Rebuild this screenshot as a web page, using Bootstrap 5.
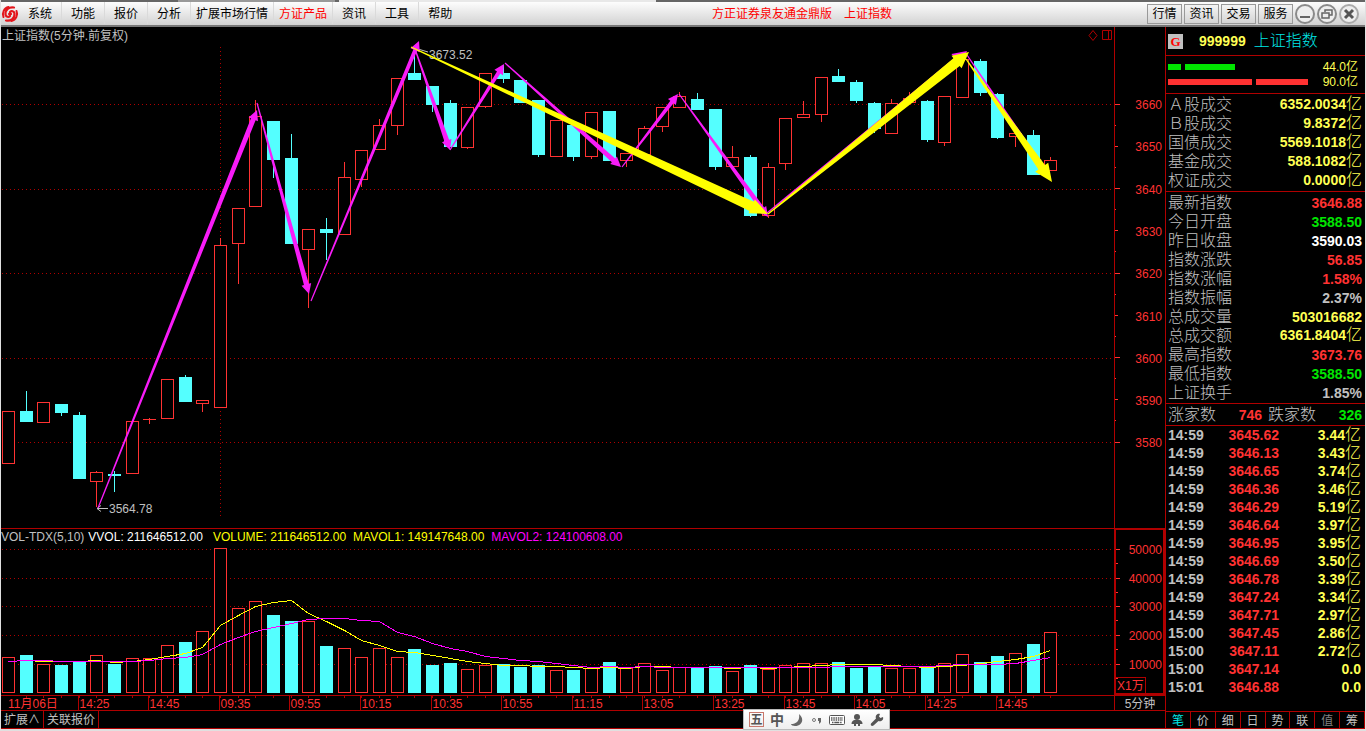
<!DOCTYPE html>
<html lang="zh-CN">
<head>
<meta charset="utf-8">
<meta name="viewport" content="width=device-width, initial-scale=1">
<title>上证指数 - 方正证券泉友通金鼎版</title>
<link href="https://cdn.jsdelivr.net/npm/bootstrap@5.3.0/dist/css/bootstrap.min.css" rel="stylesheet">
<style>
:root{--line:#b00000;--up:#ff3232;--down:#54ffff;--grey:#c0c0c0;--gold:#ffff54;--green:#00e600}
body{font-family:"Liberation Sans","Noto Sans CJK SC",sans-serif;font-size:12px;line-height:16px;background:#000;color:var(--grey);height:100vh;min-height:600px;border:1px solid #e0e0e0;border-width:0 1px 2px}
a{color:inherit;text-decoration:none}
button{font:inherit;color:inherit;background:none;border:0;padding:0}
.strip{height:2px;background:linear-gradient(90deg,#666 0 13%,#999 13% 24.5%,#666 24.5% 24.8%,#e8e8e8 24.8% 48%,#666 48%)}
.topbar{height:25px;background:linear-gradient(#fdfdfd,#d2d2d2);border-bottom:2px solid #777;color:#000}
.menu a{padding:5px 9px 3px;border-right:1px solid #dadada}
.menu a.longer{padding:5px 5px 3px}
.menu li:last-child a{border:0}
.hot{color:#f00}
.caption{flex:0 0 435px;gap:12px;padding-top:1px}
.tool{width:35px;height:20px;border:1px solid #999;background:linear-gradient(#f4f4f4,#d4d4d4)}
.tools{gap:2px;padding-right:6px}
.price-pane{flex:501 1 0;border-bottom:1px solid var(--line);min-height:0}
.vol-pane{flex:166 1 0;min-height:0}
.pane{position:relative}
.pane svg{display:block;width:100%;height:100%}
.pane-title{position:absolute;left:1px;top:1px}
.legend{top:0;left:0}
.legend span{white-space:nowrap;margin-left:7px}
.legend span:first-child{margin-left:0}
.legend span:nth-child(2){margin-left:4px}
.legend span:nth-child(3){margin-left:10px}
.axis{flex:0 0 51px;border-left:1px solid var(--line)}
.vol-pane .axis{border:2px solid var(--line);border-top-width:1px;position:relative}
.unit{position:absolute;left:0;bottom:0;border:1px solid var(--line);border-width:1px 1px 0 0;color:var(--up);height:16px;padding:0 1px;white-space:nowrap}
.time-row{height:16px;border:1px solid var(--line);border-width:1px 0}
.time-row .period{flex:0 0 51px;border-left:1px solid var(--line);text-align:center;line-height:16px}
.sheet-row{height:18px;border-bottom:1px solid var(--line)}
.sheet-row button{border-right:1px solid var(--line);padding:0 3px;line-height:18px}
.quote{flex:0 0 200px;border-left:1px solid var(--line)}
.quote section{border-bottom:1px solid var(--line);padding:1px 3px 1px 2px}
.quote th{font-weight:300;font-size:16px;padding:0;white-space:nowrap}
.quote td{padding:0;text-align:right;white-space:nowrap}
.quote table{width:100%}
.facts tr{height:19px}
.facts th,.facts td{line-height:18px}
.breadth{table-layout:fixed}
.breadth th{width:48px}
.breadth th+td{width:46px}
.breadth th:nth-child(3){width:54px;padding-left:6px}
.breadth td:last-child{width:auto}
.deals table{table-layout:fixed}
.deals tr{height:18px}
.deals td{line-height:16px}
.deals td:first-child{width:40px}
.deals td:nth-child(2){width:71px}
.n{font-weight:700;font-size:14px}
.u{font-weight:300;font-size:16px;line-height:1}
.y{color:var(--gold)}.r{color:var(--up)}.g{color:var(--green)}.w{color:#fff}
.badge-g{width:15px;height:15px;background:var(--grey);color:#f00;font:700 13px/15px "Liberation Serif",serif;text-align:center}
.strength{height:15px}
.seg{height:6px}
.qtabs button{flex:1 1 0;border-right:1px solid var(--line);line-height:18px}
.qtabs{height:18px;border:1px solid var(--line);border-width:1px 0}
.ime{position:absolute;left:54.4%;bottom:1px;height:21px;background:linear-gradient(#fff,#eee);border:1px solid #bbb;padding:0 2px 0 3px;color:#555}
.ime button{width:20px;height:19px;display:flex;align-items:center;justify-content:center;font-weight:700}
.ime .wubi{width:15px;height:15px;border:1px solid #c8776c;margin:0 3px 0 2px}
svg text{font-family:"Liberation Sans","Noto Sans CJK SC",sans-serif;font-size:12px}
</style>
</head>
<body class="d-flex flex-column">
<header>
  <div class="strip"></div>
  <nav class="topbar d-flex align-items-center">
    <svg width="18" height="18" viewBox="0 0 18 18" fill="none" stroke="#e3161c" stroke-linecap="round" aria-hidden="true"><path d="M7.500 2C3 3 .8 8 2.500 12" stroke-width="2"/><path d="M10.500 16C15 15 17.200 10 15.500 6" stroke-width="2"/><path d="M13 2.500C8 1.500 4 5 4.500 9.500 5 12 7.500 12.500 9 11" stroke-width="2.200"/><path d="M5 15.500C10 16.500 14 13 13.500 8.500 13 6 10.500 5.500 9 7" stroke-width="2.200"/><circle cx="9" cy="9" r="1.400" fill="#e3161c"/></svg>
    <ul class="menu list-unstyled d-flex mb-0 text-nowrap">
      <li><a href="#">系统</a></li><li><a href="#">功能</a></li><li><a href="#">报价</a></li><li><a href="#">分析</a></li><li><a class="longer" href="#">扩展市场行情</a></li><li><a href="#" class="hot longer">方证产品</a></li><li><a href="#">资讯</a></li><li><a href="#">工具</a></li><li><a href="#">帮助</a></li>
    </ul>
    <div class="caption hot ms-auto d-flex text-nowrap"><span>方正证券泉友通金鼎版</span><span>上证指数</span></div>
    <div class="tools d-flex align-items-center">
      <button class="tool">行情</button><button class="tool">资讯</button><button class="tool">交易</button><button class="tool">服务</button>
      <button aria-label="最小化"><svg class="d-block" width="20" height="20" fill="none" stroke="#8a8a8a" stroke-width="2"><circle cx="10" cy="10" r="9" fill="#eee"/><path d="M5 13h10" stroke="#666" stroke-width="2"/></svg></button>
      <button aria-label="还原"><svg class="d-block" width="20" height="20" fill="none" stroke="#8a8a8a" stroke-width="2"><circle cx="10" cy="10" r="9" fill="#eee"/><path d="M8 8V6h7v5h-3M5 9h7v5H5z" stroke="#666" stroke-width="1.500"/></svg></button>
      <button aria-label="关闭"><svg class="d-block" width="20" height="20" fill="none" stroke="#aaa" stroke-width="2"><circle cx="10" cy="10" r="9" fill="#eee"/><path d="M6 6l8 8M14 6l-8 8" stroke="#555" stroke-width="3"/></svg></button>
    </div>
  </nav>
</header>
<main class="d-flex flex-grow-1" style="min-height:0">
  <div class="d-flex flex-column flex-grow-1" style="min-width:0">
    <div class="price-pane d-flex">
      <div class="pane flex-grow-1"><svg id="price"></svg><div class="pane-title">上证指数(5分钟.前复权)</div></div>
      <div class="axis"><svg id="priceAxis" width="50" height="100%"></svg></div>
    </div>
    <div class="vol-pane d-flex">
      <div class="pane flex-grow-1"><svg id="volume"></svg>
        <div class="pane-title legend d-flex"><span>VOL-TDX(5,10)</span><span class="w">VVOL: 211646512.00</span><span style="color:#ff0">VOLUME: 211646512.00</span><span style="color:#ff0">MAVOL1: 149147648.00</span><span style="color:#f0f">MAVOL2: 124100608.00</span></div>
      </div>
      <div class="axis"><svg id="volAxis" width="47" height="100%"></svg><span class="unit">X1万</span></div>
    </div>
    <div class="time-row d-flex"><div class="pane flex-grow-1"><svg id="times"></svg></div><div class="period">5分钟</div></div>
    <div class="sheet-row d-flex"><button>扩展∧</button><button>关联报价</button></div>
  </div>
  <aside class="quote d-flex flex-column">
    <section class="d-flex align-items-center" style="height:29px"><span class="badge-g">G</span><span class="n y ms-3">999999</span><span class="u ms-1 ps-1" style="color:#00e6e6">上证指数</span></section>
    <section style="height:38px;padding-top:3px">
      <div class="strength d-flex align-items-center"><i class="seg me-1" style="width:13px;background:#00e600"></i><i class="seg" style="width:50px;background:#00e600"></i><span class="y ms-auto pe-1">44.0亿</span></div>
      <div class="strength d-flex align-items-center"><i class="seg me-1" style="width:84px;background:#ff3232"></i><i class="seg" style="width:52px;background:#ff3232"></i><span class="y ms-auto pe-1">90.0亿</span></div>
    </section>
    <section class="facts"><table>
      <tr><th>Ａ股成交</th><td class="y"><span class="n">6352.0034</span><span class="u">亿</span></td></tr>
      <tr><th>Ｂ股成交</th><td class="y"><span class="n">9.8372</span><span class="u">亿</span></td></tr>
      <tr><th>国债成交</th><td class="y"><span class="n">5569.1018</span><span class="u">亿</span></td></tr>
      <tr><th>基金成交</th><td class="y"><span class="n">588.1082</span><span class="u">亿</span></td></tr>
      <tr><th>权证成交</th><td class="y"><span class="n">0.0000</span><span class="u">亿</span></td></tr>
    </table></section>
    <section class="facts"><table>
      <tr><th>最新指数</th><td class="n r">3646.88</td></tr>
      <tr><th>今日开盘</th><td class="n g">3588.50</td></tr>
      <tr><th>昨日收盘</th><td class="n w">3590.03</td></tr>
      <tr><th>指数涨跌</th><td class="n r">56.85</td></tr>
      <tr><th>指数涨幅</th><td class="n r">1.58%</td></tr>
      <tr><th>指数振幅</th><td class="n">2.37%</td></tr>
      <tr><th>总成交量</th><td class="n y">503016682</td></tr>
      <tr><th>总成交额</th><td class="y"><span class="n">6361.8404</span><span class="u">亿</span></td></tr>
      <tr><th>最高指数</th><td class="n r">3673.76</td></tr>
      <tr><th>最低指数</th><td class="n g">3588.50</td></tr>
      <tr><th>上证换手</th><td class="n">1.85%</td></tr>
    </table></section>
    <section class="facts"><table class="breadth"><tr><th>涨家数</th><td class="n r">746</td><th>跌家数</th><td class="n g">326</td></tr></table></section>
    <div class="deals flex-grow-1"><table id="deals" style="margin-left:2px;width:193px"></table></div>
    <div class="qtabs d-flex"><button style="color:#00e6e6">笔</button><button>价</button><button>细</button><button>日</button><button>势</button><button>联</button><button style="color:#808080">值</button><button>筹</button></div>
  </aside>
</main>
<div class="ime d-flex align-items-center">
  <button class="wubi">五</button><button style="font-size:14px">中</button>
  <button aria-label="半角"><svg width="14" height="14"><path d="M9 1c6 5 3 12-4 12-2 0-4-1-4-2 6 0 9-4 8-10z" fill="#666"/></svg></button>
  <button aria-label="标点"><svg width="14" height="14"><circle cx="4" cy="7" r="1.500" fill="none" stroke="#777"/><path d="M8 5h3v4l-2 2v-3H8z" fill="#666"/></svg></button>
  <button aria-label="软键盘"><svg width="16" height="12"><rect x=".5" y="1.500" width="15" height="9" rx="1" fill="#fff" stroke="#555"/><path d="M2 4h12M2 6h12" stroke="#555" stroke-width="1.400" stroke-dasharray="1.500 .8"/><path d="M3 8.500h10" stroke="#555" stroke-width="1.400" stroke-dasharray="1.500 .8 5 .8"/></svg></button>
  <button aria-label="用户"><svg width="14" height="14"><circle cx="7" cy="4" r="3" fill="#555"/><path d="M4.500 7h5C11.500 7.500 12.500 9 12.500 11H10v2H8v-2H6v2H4v-2H1.500C1.500 9 2.500 7.500 4.500 7z" fill="#555"/></svg></button>
  <button aria-label="设置"><svg width="14" height="14"><path d="M13 4l-2.500 1L9 3.500 10 1C7 0 5 3 6 5.500L1 10.500c-1 2 1 3 2.500 2L8.500 8C11 9 14 7 13 4z" fill="#555"/></svg></button>
</div>
<script src="https://cdn.jsdelivr.net/npm/bootstrap@5.3.0/dist/js/bootstrap.bundle.min.js"></script>
<script>
// Each candle: [rising?, high, body top, body bottom, low, volume top], in design units of a 1113 x 668 plot.
const K=[[1,411,411,463,463,657],[0,391,411,422,422,655],[1,402,402,422,422,664],[0,404,404,413,416,665],[0,412,415,479,479,662],[1,471,472,481,507,655],[0,471,474,476,492,664],[1,421,421,473,473,658],[1,418,419,419,424,658],[1,379,379,418,418,645],[0,375,377,402,402,642],[1,400,400,403,412,631],[1,238,245,407,407,548],[1,208,208,243,284,608],[1,100,116,206,206,601],[0,121,121,160,178,615],[0,134,158,244,244,621],[1,229,229,249,308,621],[0,218,229,233,260,646],[1,162,177,234,234,648],[1,150,150,179,187,657],[1,119,125,149,149,648],[1,78,78,125,135,657],[0,50,73,80,80,649],[0,86,86,105,112,665],[0,100,103,147,147,663],[1,107,107,147,149,669],[1,73,73,106,108,665],[0,65,73,79,83,664],[0,80,80,103,103,667],[0,100,100,155,157,665],[1,120,120,156,156,670],[0,125,125,157,161,670],[1,112,112,156,159,668],[0,111,111,161,161,662],[1,153,153,160,167,668],[1,126,128,154,156,663],[1,107,107,126,132,670],[1,92,96,107,107,667],[0,93,99,110,110,668],[0,109,109,167,170,666],[1,146,157,166,166,671],[0,155,157,216,217,665],[1,163,167,215,218,669],[1,118,118,163,170,665],[1,101,114,117,117,663],[1,77,77,114,122,663],[0,69,76,82,82,662],[0,80,82,101,103,668],[0,102,103,129,133,667],[1,99,103,133,133,668],[1,92,98,102,102,668],[0,100,101,140,142,667],[1,96,96,142,146,663],[1,57,59,97,97,654],[0,59,61,93,96,662],[0,93,94,138,139,656],[1,133,133,136,147,653],[0,130,135,175,175,644],[1,157,160,170,170,632]];
const MA5=[661,660,661,661,661,660,662,661,659,656,653,647,625,615,606,602,600,613,621,630,640,645,651,652,655,658,661,663,665,665,666,666,667,668,667,668,666,666,667,667,667,668,667,668,667,666,665,664,664,664,665,666,667,666,665,663,661,659,656,650];
const MA10=[661,660,660,661,661,661,661,661,660,658,657,654,644,637,631,627,623,619,618,618,620,621,632,636,643,648,651,656,658,660,661,663,665,667,666,667,666,667,667,667,667,667,667,667,667,667,667,666,666,666,666,666,666,665,664,664,664,663,660,657];
const UP='#ff3232',DOWN='#54ffff',LINE='#b00000',PINK='#f81cf8',YELLOW='#ffff00';
// Trend arrows: x1, y1, x2, y2, neck width, head width, head length, colour
const ARROWS=[[98,508,257,110,5,10,10,PINK],[257,103,309,294,5,10,10,PINK],[311,301,419,41,4,10,10,PINK],[415,49,450,150,5,10,10,PINK],[450,150,504,64,4,10,10,PINK],[505,63,621,167,5,10,10,PINK],[622,167,678,94,4,10,10,PINK],[679,94,768,217,5,10,10,PINK],[767,213,967,51,5,15,14,PINK],[967,55,1042,166,3,6,6,PINK],[411,47,768,214,10,15,18,YELLOW],[768,214,969,52,10,16,16,YELLOW],[966,59,1052,182,8,16,18,YELLOW]];
const cx=i=>Math.floor(8.5+i*53/3);
const el=id=>document.getElementById(id);
const rect=(x,y,w,h,f,s)=>`<rect x="${x}" y="${y}" width="${w}" height="${h}" fill="${f}"${s?` stroke="${s}"`:''}/>`;
const line=(x1,y1,x2,y2,c,d)=>`<path d="M${x1} ${y1}L${x2} ${y2}" stroke="${c}" fill="none"${d?' stroke-dasharray="1 3"':''}/>`;
const text=(x,y,t,c,a)=>`<text x="${x}" y="${y}" fill="${c}" text-anchor="${a||'start'}">${t}</text>`;

function arrow([x1,y1,x2,y2,neck,head,len,c],X,Y){
  x1=X(x1);x2=X(x2);y1=Y(y1);y2=Y(y2);
  const d=Math.hypot(x2-x1,y2-y1),ux=(x2-x1)/d,uy=(y2-y1)/d,bx=x2-ux*len,by=y2-uy*len;
  const p=(x,y,w)=>`${x-uy*w},${y+ux*w}`;
  return `<polygon fill="${c}" points="${p(x1,y1,.6)} ${p(bx,by,neck/2)} ${p(bx,by,head/2)} ${x2},${y2} ${p(bx,by,-head/2)} ${p(bx,by,-neck/2)} ${p(x1,y1,-.6)}"/>`;
}
function draw(){
  const p=el('price'),W=p.clientWidth,H=p.clientHeight,sx=W/1113,sy=H/501;
  const X=x=>(x-1)*sx,Y=y=>(y-27)*sy,bw=Math.max(3,Math.round(13*sx));
  const xc=i=>Math.floor(X(cx(i)))+.5;
  let s='';
  for(const y of [104,189,273,358,442])s+=line(1,Math.floor(Y(y))+.5,W,Math.floor(Y(y))+.5,LINE,1);
  const vx=xc(12);s+=line(vx,Y(47),vx,Y(518),LINE,1);
  K.forEach(([up,h,a,b,l],i)=>{
    const x=xc(i),c=up?UP:DOWN;
    if(h<a)s+=line(x,Y(h),x,Y(a),c);
    if(l>b)s+=line(x,Y(b),x,Y(l),c);
    if(a===b)s+=line(x-bw/2,Math.round(Y(a))+.5,x+bw/2,Math.round(Y(a))+.5,c);
    else s+=up?rect(x-(bw-1)/2,Math.round(Y(a))+.5,bw-1,Math.round(Y(b)-Y(a)),'#000',c):rect(x-bw/2,Math.round(Y(a)),bw,Math.round(Y(b)-Y(a)),c);
  });
  s+=text(X(429),Y(59),'3673.52','#c0c0c0')+line(X(418),Y(49),X(428),Y(52),'#c0c0c0');
  s+=text(X(109),Y(513),'3564.78','#c0c0c0')+`<path d="M${X(108)} ${Y(508)+.5}h-11l4-3m-4 3l4 3" stroke="#c0c0c0" fill="none"/>`;
  ARROWS.forEach(a=>s+=arrow(a,X,Y));
  s+=`<path d="M${W-25} 8.500l4-5 4 5-4 5z M${W-11.5} 3.500h9v9h-9z m6 0v9" fill="none" stroke="${LINE}"/>`;
  p.innerHTML=s;

  s='';
  for(let i=0;i<17;i++){const y=Math.floor(Y(104+i*21.13))+.5;s+=line(0,y,i%4==0?5:i%4==2?3:1,y,UP)}
  [3660,3650,3640,3630,3620,3610,3600,3590,3580].forEach((v,i)=>s+=text(47,Math.round(Y(104+i*42.3))+5,v,UP,'end'));
  el('priceAxis').innerHTML=s;

  const v=el('volume'),VH=v.clientHeight,V=y=>(y-529)*VH/166;
  s='';
  const rows=[549,578,606,635,664];
  for(const y of rows)s+=line(1,Math.floor(V(y))+.5,W,Math.floor(V(y))+.5,LINE,1);
  K.forEach(([up,,,,,t],i)=>{const x=xc(i);s+=up?rect(x-(bw-1)/2,Math.round(V(t))+.5,bw-1,Math.round(V(692)-V(t)),'#000',UP):rect(x-bw/2,Math.round(V(t)),bw,Math.round(V(693)-V(t)),DOWN)});
  for(const [m,c] of [[MA5,YELLOW],[MA10,'#ff00ff']])s+=`<polyline fill="none" shape-rendering="crispEdges" stroke="${c}" points="${m.map((y,i)=>xc(i)+','+(V(y)+.5)).join(' ')}"/>`;
  v.innerHTML=s;
  s='';
  rows.forEach((y,i)=>{const t=Math.floor(V(y))-.5;s+=line(0,t,4,t,UP)+line(0,t+14,2,t+14,UP)+text(46,Math.round(V(y))+4,(5-i)+'0000',UP,'end')});
  el('volAxis').innerHTML=s;

  s=text(7,12,'11月06日',UP);
  for(let i=1;i<60;i++){const x=xc(i);s+=line(x,0,x,2,LINE)}
  '14:25 14:45 09:35 09:55 10:15 10:35 10:55 11:15 13:05 13:25 13:45 14:05 14:25 14:45'.split(' ').forEach((t,i)=>{
    const x=Math.floor(X(78+i*70.62))+.5;s+=line(x,0,x,14,LINE)+text(x+1,12,t,UP)});
  el('times').innerHTML=s;
}
const DEALS=[['14:59','3645.62','3.44'],['14:59','3646.13','3.43'],['14:59','3646.65','3.74'],['14:59','3646.36','3.46'],['14:59','3646.29','5.19'],['14:59','3646.64','3.97'],['14:59','3646.95','3.95'],['14:59','3646.69','3.50'],['14:59','3646.78','3.39'],['14:59','3647.24','3.34'],['14:59','3647.71','2.97'],['15:00','3647.45','2.86'],['15:00','3647.11','2.72'],['15:00','3647.14','0.0'],['15:01','3646.88','0.0']];
el('deals').innerHTML=DEALS.map(([t,p,a])=>`<tr><td class="n text-start">${t}</td><td class="n r">${p}</td><td class="y"><span class="n">${a}</span>${a==='0.0'?'':'<span class="u">亿</span>'}</td></tr>`).join('');
draw();
addEventListener('resize',draw);
</script>
</body>
</html>
